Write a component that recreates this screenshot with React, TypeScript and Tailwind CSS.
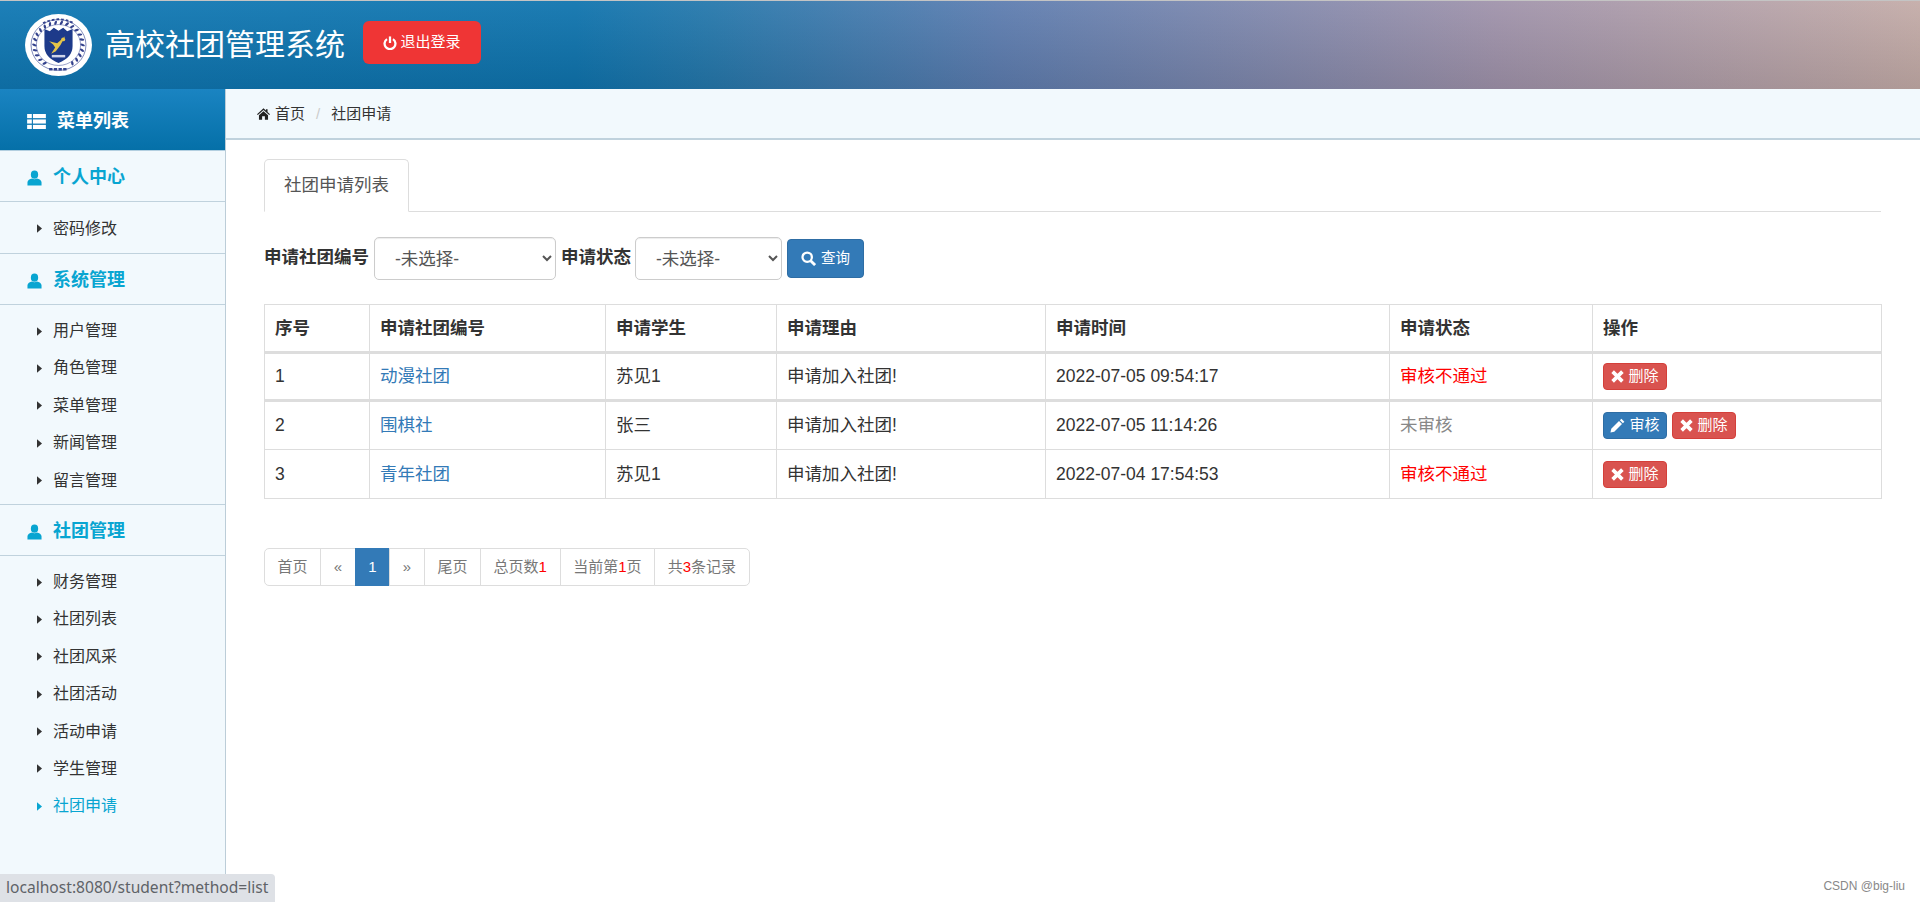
import React from "react";

const FONT = "[font-family:'Liberation_Sans','Noto_Sans_CJK_SC',sans-serif]";

function Logo() {
  const leaves = [];
  for (let i = 0; i < 22; i++) {
    const a = 35 + i * ((290) / 21);
    leaves.push(<ellipse key={i} cx="50" cy="14" rx="1.8" ry="3.6" fill="#33418c" transform={`rotate(${a + 180} 50 50) rotate(25 50 14)`} />);
  }
  return (
    <svg viewBox="0 0 100 100" preserveAspectRatio="none" className="w-[67px] h-[62px] shrink-0">
      <ellipse cx="50" cy="50" rx="50" ry="50" fill="#fff" />
      <circle cx="50" cy="50" r="41" fill="none" stroke="#3a4a96" strokeWidth="1" />
      <circle cx="50" cy="50" r="33" fill="none" stroke="#3a4a96" strokeWidth="0.8" />
      {leaves}
      <path d="M29 24 L37 28 L43 22 L50 27 L57 22 L63 28 L71 24 L71 52 Q71 70 50 79 Q29 70 29 52 Z" fill="#1d3a8a" />
      <path d="M36 44 L48 47 L60 36 L53 50 L46 60 L39 64 L45 54 L42 49 Z" fill="#e4c449" />
      <circle cx="57" cy="41" r="3" fill="#e4c449" />
      <rect x="40" y="66" width="20" height="4" fill="#cfd5ea" />
      <path d="M27 15 Q50 2 73 15" fill="none" stroke="#33418c" strokeWidth="3" strokeDasharray="4 3" />
      <path d="M36 89 H64" stroke="#33418c" strokeWidth="4" strokeDasharray="5 2" />
    </svg>
  );
}

function ListIcon() {
  return (
    <svg viewBox="0 0 20 16" className="w-[19px] h-[15px]" fill="#fff">
      <rect x="0" y="0" width="5" height="4.4" /><rect x="6.2" y="0" width="13.8" height="4.4" />
      <rect x="0" y="5.8" width="5" height="4.4" /><rect x="6.2" y="5.8" width="13.8" height="4.4" />
      <rect x="0" y="11.6" width="5" height="4.4" /><rect x="6.2" y="11.6" width="13.8" height="4.4" />
    </svg>
  );
}

function UserIcon() {
  return (
    <svg viewBox="0 0 16 16" className="w-[15px] h-[16px]" fill="#08a5d1">
      <ellipse cx="8" cy="4.4" rx="3.9" ry="4.4" />
      <path d="M0.5 16 V12.6 C0.5 10.4 3 9.3 5.4 8.6 C6.6 9.6 9.4 9.6 10.6 8.6 C13 9.3 15.5 10.4 15.5 12.6 V16 Z" />
    </svg>
  );
}

function HomeIcon() {
  return (
    <svg viewBox="0 0 16 14" className="w-[13px] h-[12px]" fill="#222">
      <path d="M8 0 L11 2.7 V1 H13 V4.5 L16 7.2 L15 8.3 L8 2.2 L1 8.3 L0 7.2 Z" />
      <path d="M8 3.6 L13.6 8.4 V14 H9.7 V9.8 H6.3 V14 H2.4 V8.4 Z" />
    </svg>
  );
}

function PowerIcon() {
  return (
    <svg viewBox="0 0 16 16" className="w-[14px] h-[14px]" fill="none" stroke="#fff" strokeWidth="2.6">
      <path d="M4.6 3.6 A6.2 6.2 0 1 0 11.4 3.6" />
      <path d="M8 0.5 V8" />
    </svg>
  );
}

function SearchIcon() {
  return (
    <svg viewBox="0 0 16 16" className="w-[15px] h-[15px]" fill="none" stroke="#fff">
      <circle cx="6.6" cy="6.6" r="5" strokeWidth="2.4" />
      <path d="M10.3 10.3 L15 15" strokeWidth="3" />
    </svg>
  );
}

function XIcon() {
  return (
    <svg viewBox="0 0 12 12" className="w-[13px] h-[13px]" stroke="#fff" strokeWidth="3.4">
      <path d="M1.5 1.5 L10.5 10.5 M10.5 1.5 L1.5 10.5" />
    </svg>
  );
}

function PencilIcon() {
  return (
    <svg viewBox="0 0 14 14" className="w-[15px] h-[15px]" fill="#fff">
      <path d="M10.6 0.6 L13.4 3.4 L12 4.8 L9.2 2 Z" />
      <path d="M8.4 2.8 L11.2 5.6 L4 12.8 L0.4 13.6 L1.2 10 Z" />
    </svg>
  );
}

function Tri({ active }: { active?: boolean }) {
  return (
    <svg viewBox="0 0 6 10" className="w-[5px] h-[9px] shrink-0" fill={active ? "#08a5d1" : "#333"}>
      <path d="M0 0 L6 5 L0 10 Z" />
    </svg>
  );
}

function GroupTitle({ title }: { title: string }) {
  return (
    <div className="h-[51px] border-b border-[#c0d2dd] flex items-center pt-[3px] pl-[27px] gap-[11px]">
      <UserIcon />
      <span className="text-[18px] font-bold text-[#08a5d1]">{title}</span>
    </div>
  );
}

function Item({ t, active }: { t: string; active?: boolean }) {
  return (
    <li className="h-[37.4px] flex items-center pt-[2px] pl-[37px] gap-[11px]">
      <Tri active={active} />
      <span className={`text-[16px] ${active ? "text-[#08a5d1]" : "text-[#333]"}`}>{t}</span>
    </li>
  );
}

const rows = [
  { id: "1", club: "动漫社团", stu: "苏见1", reason: "申请加入社团!", time: "2022-07-05 09:54:17", status: "审核不通过", audit: false },
  { id: "2", club: "围棋社", stu: "张三", reason: "申请加入社团!", time: "2022-07-05 11:14:26", status: "未审核", audit: true },
  { id: "3", club: "青年社团", stu: "苏见1", reason: "申请加入社团!", time: "2022-07-04 17:54:53", status: "审核不通过", audit: false },
];

const thCls = "border border-[#ddd] border-b-[3px] px-[10px] text-left font-bold text-[17.5px] text-[#333] h-[48px]";
const tdCls = "border border-[#ddd] px-[10px] text-[17.5px]";

function DelBtn() {
  return (
    <button className="h-[27px] w-[64px] rounded-[4px] bg-[#d9534f] border border-[#d43f3a] text-white text-[15px] inline-flex items-center justify-center gap-[4px]">
      <XIcon />删除
    </button>
  );
}

function Page({ children, active, first, last }: { children: React.ReactNode; active?: boolean; first?: boolean; last?: boolean }) {
  return (
    <span
      className={`h-[38px] flex items-center px-[12.6px] text-[15px] border -ml-px ${active ? "bg-[#337ab7] border-[#337ab7] text-white" : "bg-white border-[#ddd] text-[#777]"} ${first ? "rounded-l-[5px] ml-0" : ""} ${last ? "rounded-r-[5px]" : ""}`}
    >
      {children}
    </span>
  );
}

function Red({ children }: { children: React.ReactNode }) {
  return <span className="text-[#f00]">{children}</span>;
}

const selectCls = "h-[43px] bg-white border border-[#ccc] rounded-[5px] pl-[16px] pr-[6px] text-[17.5px] font-normal text-[#555] shadow-[inset_0_1px_1px_rgba(0,0,0,0.075)]";

export default function App() {
  return (
    <div className={`h-[902px] w-[1920px] overflow-hidden relative bg-white flex flex-col ${FONT}`}>
      <header className="h-[89px] shrink-0 border-t border-[#c4c4c4] flex items-center pl-[25px] bg-[linear-gradient(180deg,rgba(255,255,255,0.06),rgba(0,0,0,0.1)),linear-gradient(90deg,#0f78b4_0%,#0f74ae_30%,#2578ac_37%,#5d7db0_52%,#a093ab_78%,#c4aca8_100%)]">
        <Logo />
        <h1 className="ml-[13px] text-[30px] font-normal text-white leading-none">高校社团管理系统</h1>
        <button className="ml-[18px] mb-[5px] w-[118px] h-[43px] rounded-[6px] bg-[#ef3535] text-white text-[15px] flex items-center justify-center gap-[3px]">
          <PowerIcon />退出登录
        </button>
      </header>
      <div className="flex flex-1 min-h-0">
        <aside className="w-[226px] shrink-0 bg-[#f2f9fd] border-r border-[#bccdd8]">
          <div className="h-[62px] border-b border-[#b3cfe0] flex items-center pt-[3px] pl-[27px] gap-[11px] bg-[linear-gradient(180deg,#1a84c2,#0570a8)]">
            <ListIcon />
            <span className="text-[18px] font-bold text-white">菜单列表</span>
          </div>
          <GroupTitle title="个人中心" />
          <ul className="py-[7px] border-b border-[#c0d2dd]">
            <Item t="密码修改" />
          </ul>
          <GroupTitle title="系统管理" />
          <ul className="py-[6px] border-b border-[#c0d2dd]">
            {["用户管理", "角色管理", "菜单管理", "新闻管理", "留言管理"].map((t) => (
              <Item key={t} t={t} />
            ))}
          </ul>
          <GroupTitle title="社团管理" />
          <ul className="py-[6px]">
            {["财务管理", "社团列表", "社团风采", "社团活动", "活动申请", "学生管理", "社团申请"].map((t) => (
              <Item key={t} t={t} active={t === "社团申请"} />
            ))}
          </ul>
        </aside>
        <main className="flex-1 min-w-0">
          <div className="h-[51px] bg-[#f2f9fd] border-b-2 border-[#c0d2dd] flex items-center pt-[1px] pl-[31px] text-[15px] text-[#333]">
            <HomeIcon />
            <span className="ml-[5px]">首页</span>
            <span className="mx-[11px] text-[#ccc]">/</span>
            <span>社团申请</span>
          </div>
          <div className="pl-[38px] pr-[39px]">
            <div className="mt-[19px] border-b border-[#ddd] h-[53px]">
              <div className="w-[145px] h-[53px] border border-[#ddd] border-b-white rounded-t-[5px] bg-white flex items-center justify-center text-[17.5px] text-[#555]">
                社团申请列表
              </div>
            </div>
            <div className="mt-[25px] flex items-center h-[43px] text-[#333] text-[17.5px] font-bold">
              <span className="mb-[3px]">申请社团编号</span>
              <select className={`${selectCls} ml-[5px] w-[182px]`} defaultValue="">
                <option value="">-未选择-</option>
              </select>
              <span className="ml-[5px] mb-[3px]">申请状态</span>
              <select className={`${selectCls} ml-[4px] w-[147px]`} defaultValue="">
                <option value="">-未选择-</option>
              </select>
              <button className="ml-[5px] w-[77px] h-[39px] rounded-[4px] bg-[#337ab7] border border-[#2e6da4] text-white text-[14.5px] font-normal flex items-center justify-center gap-[5px]">
                <SearchIcon />查询
              </button>
            </div>
            <table className="mt-[24px] w-[1617px] table-fixed border-collapse">
              <colgroup>
                <col className="w-[105px]" />
                <col className="w-[236px]" />
                <col className="w-[171px]" />
                <col className="w-[269px]" />
                <col className="w-[344px]" />
                <col className="w-[203px]" />
                <col className="w-[289px]" />
              </colgroup>
              <thead>
                <tr>
                  {["序号", "申请社团编号", "申请学生", "申请理由", "申请时间", "申请状态", "操作"].map((h) => (
                    <th key={h} className={thCls}>{h}</th>
                  ))}
                </tr>
              </thead>
              <tbody>
                {rows.map((r, i) => (
                  <tr key={r.id} className={i === 0 ? "h-[48px] border-b-[3px] border-[#ddd]" : "h-[49px]"}>
                    <td className={`${tdCls} text-[#333]`}>{r.id}</td>
                    <td className={`${tdCls} text-[#337ab7]`}>{r.club}</td>
                    <td className={`${tdCls} text-[#333]`}>{r.stu}</td>
                    <td className={`${tdCls} text-[#333]`}>{r.reason}</td>
                    <td className={`${tdCls} text-[#333]`}>{r.time}</td>
                    <td className={`${tdCls} ${r.audit ? "text-[#888]" : "text-[#f00]"}`}>{r.status}</td>
                    <td className={tdCls}>
                      <div className="flex items-center gap-[5px]">
                        {r.audit && (
                          <button className="h-[27px] w-[64px] rounded-[4px] bg-[#337ab7] border border-[#2e6da4] text-white text-[15px] inline-flex items-center justify-center gap-[4px]">
                            <PencilIcon />审核
                          </button>
                        )}
                        <DelBtn />
                      </div>
                    </td>
                  </tr>
                ))}
              </tbody>
            </table>
            <div className="mt-[49px] flex">
              <Page first>首页</Page>
              <Page>«</Page>
              <Page active>1</Page>
              <Page>»</Page>
              <Page>尾页</Page>
              <Page>总页数<Red>1</Red></Page>
              <Page>当前第<Red>1</Red>页</Page>
              <Page last>共<Red>3</Red>条记录</Page>
            </div>
          </div>
        </main>
      </div>
      <div className="absolute left-0 bottom-0 h-[28px] w-[275px] bg-[#dee1e6] rounded-tr-[4px] flex items-center pl-[6px] text-[15.6px] text-[#5f6368] [font-family:'Noto_Sans',sans-serif]">
        localhost:8080/student?method=list
      </div>
      <div className="absolute right-[15px] bottom-[10px] text-[12px] text-[#888] leading-none">CSDN @big-liu</div>
    </div>
  );
}
